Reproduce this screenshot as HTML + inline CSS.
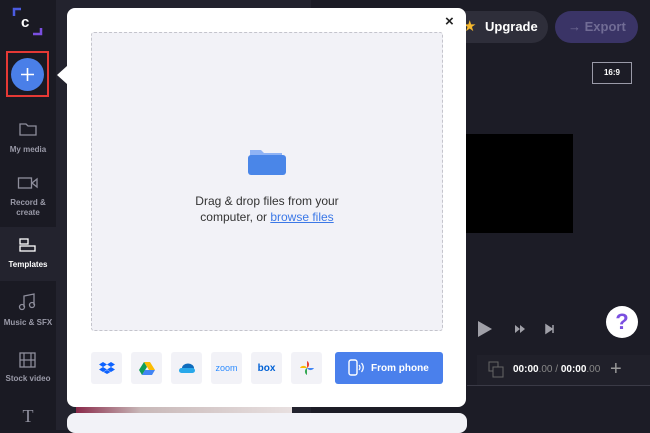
<!DOCTYPE html>
<html><head><meta charset="utf-8"><style>
*{margin:0;padding:0;box-sizing:border-box}
body{width:650px;height:430px;overflow:hidden;background:#1c1c26;font-family:"Liberation Sans",sans-serif;position:relative}
.abs{position:absolute}
.side{left:0;top:0;width:56px;height:430px;background:#1a1a23}
.lbl{width:56px;text-align:center;color:#9a9aa8;font-size:8px;font-weight:bold;line-height:10px}
.panel{left:56px;top:0;width:255px;height:430px;background:#23232e}
.btn{width:31px;height:32px;background:#f2f2f7;border-radius:3px;top:352px;display:flex;align-items:center;justify-content:center}
</style></head><body>
<div class="abs side"></div>
<div class="abs" style="left:0;top:227px;width:56px;height:54px;background:#23232e"></div>
<svg class="abs" style="left:12px;top:6px" width="32" height="30"><path d="M2 10V3h7" stroke="#4b5be0" stroke-width="2.5" fill="none"/><path d="M29 22v6h-8" stroke="#7a4fe0" stroke-width="2.5" fill="none"/><text x="9" y="21" fill="#fff" font-size="15" font-weight="bold" font-family="Liberation Sans">c</text></svg>
<div class="abs" style="left:6px;top:51px;width:43px;height:46px;border:2px solid #e53935"></div>
<div class="abs" style="left:11px;top:58px;width:33px;height:33px;border-radius:50%;background:#4a7fe8"></div>
<svg class="abs" style="left:19px;top:66px" width="17" height="17"><path d="M8.5 2v13M2 8.5h13" stroke="#fff" stroke-width="1.6"/></svg>
<svg class="abs" style="left:18px;top:121px" width="20" height="16"><path d="M2 3h6l2 2h8v9H2z" stroke="#8e8e9c" stroke-width="1.3" fill="none"/></svg>
<div class="abs lbl" style="left:0;top:145px">My media</div>
<svg class="abs" style="left:17px;top:176px" width="22" height="14"><rect x="1.5" y="2" width="13" height="10" stroke="#8e8e9c" stroke-width="1.3" fill="none"/><path d="M15 7l5-4v8z" stroke="#8e8e9c" stroke-width="1.3" fill="none"/></svg>
<div class="abs lbl" style="left:0;top:198px">Record &amp;<br>create</div>
<svg class="abs" style="left:18px;top:237px" width="20" height="16"><rect x="2" y="2" width="8" height="5" stroke="#fff" stroke-width="1.3" fill="none"/><rect x="2" y="9" width="15" height="5" stroke="#fff" stroke-width="1.3" fill="none"/></svg>
<div class="abs lbl" style="left:0;top:260px;color:#fff">Templates</div>
<svg class="abs" style="left:18px;top:292px" width="20" height="20"><path d="M6 15V4l10-2v11" stroke="#8e8e9c" stroke-width="1.3" fill="none"/><circle cx="4" cy="15" r="2.5" stroke="#8e8e9c" stroke-width="1.3" fill="none"/><circle cx="14" cy="13" r="2.5" stroke="#8e8e9c" stroke-width="1.3" fill="none"/></svg>
<div class="abs lbl" style="left:0;top:318px">Music &amp; SFX</div>
<svg class="abs" style="left:18px;top:351px" width="20" height="18"><rect x="2" y="2" width="15" height="14" stroke="#8e8e9c" stroke-width="1.3" fill="none"/><path d="M6 2v14M13 2v14M2 9h15" stroke="#8e8e9c" stroke-width="1.2"/></svg>
<div class="abs lbl" style="left:0;top:374px">Stock video</div>
<div class="abs" style="left:0;top:406px;width:56px;text-align:center;color:#8e8e9c;font-family:'Liberation Serif';font-size:18px">T</div>

<div class="abs panel"></div>
<div class="abs" style="left:76px;top:405px;width:216px;height:10px;background:linear-gradient(90deg,#8a2a4a,#c8b8b8 30%,#e8e0e0)"></div>
<div class="abs" style="left:67px;top:413px;width:400px;height:20px;background:#f2f2f7;border-radius:8px"></div>

<div class="abs" style="left:440px;top:11px;width:108px;height:32px;border-radius:16px;background:#2e2e3a"></div>
<div class="abs" style="left:463px;top:17px;color:#f5b82e;font-size:15px">★</div>
<div class="abs" style="left:485px;top:19px;color:#fff;font-size:13px;font-weight:bold">Upgrade</div>
<div class="abs" style="left:555px;top:11px;width:83px;height:32px;border-radius:16px;background:#3a3466"></div>
<div class="abs" style="left:568px;top:19px;color:#716c95;font-size:13px;font-weight:bold">→ Export</div>
<div class="abs" style="left:592px;top:62px;width:40px;height:22px;border:1px solid #9a9aa8;color:#fff;font-size:8px;font-weight:bold;text-align:center;line-height:20px">16:9</div>
<div class="abs" style="left:440px;top:134px;width:133px;height:99px;background:#000"></div>
<svg class="abs" style="left:476px;top:319px" width="80" height="20"><path d="M2 2l14 8-14 8z" fill="#a0a0a8"/><path d="M39 6l5 4-5 4zM44 6l5 4-5 4z" fill="#a0a0a8"/><path d="M70 6l6 4-6 4z M77 6v8" fill="#a0a0a8" stroke="#a0a0a8" stroke-width="1.5"/></svg>
<div class="abs" style="left:606px;top:306px;width:32px;height:32px;border-radius:50%;background:#fff;color:#7a4fe0;font-size:22px;font-weight:bold;text-align:center;line-height:32px">?</div>
<div class="abs" style="left:477px;top:355px;width:173px;height:30px;background:#20202a"></div>
<svg class="abs" style="left:487px;top:360px" width="18" height="18"><rect x="2" y="2" width="9" height="9" stroke="#666" fill="none"/><rect x="6" y="7" width="10" height="10" stroke="#666" fill="#20202a"/></svg>
<div class="abs" style="left:513px;top:364px;color:#fff;font-size:10px;font-weight:bold">00:00<span style="color:#888;font-weight:normal">.00 / </span>00:00<span style="color:#888;font-weight:normal">.00</span></div>
<div class="abs" style="left:610px;top:358px;color:#999;font-size:20px">+</div>
<div class="abs" style="left:467px;top:385px;width:183px;height:1px;background:#3a3a46"></div>

<div class="abs" style="left:57px;top:66px;width:0;height:0;border-top:9px solid transparent;border-bottom:9px solid transparent;border-right:10px solid #fff"></div>
<div class="abs" style="left:67px;top:8px;width:399px;height:399px;background:#fff;border-radius:8px"></div>
<div class="abs" style="left:445px;top:13px;font-size:15px;font-weight:bold;color:#222">×</div>
<div class="abs" style="left:91px;top:32px;width:352px;height:299px;background:#f2f2f7;border:1px dashed #c4c4cc;border-radius:3px"></div>
<svg class="abs" style="left:247px;top:146px" width="40" height="30"><path d="M3 4h11l3 3h18v6H3z" fill="#8fb3f5"/><rect x="1" y="9" width="38" height="20" rx="3" fill="#4a86e8"/></svg>
<div class="abs" style="left:91px;top:193px;width:352px;text-align:center;color:#333;font-size:12px;line-height:16px">Drag &amp; drop files from your<br>computer, or <span style="color:#3b78e7;text-decoration:underline">browse files</span></div>
<div class="abs btn" style="left:91px"><svg width="16" height="14"><path d="M4 1l4 2.5-4 2.5-4-2.5zM12 1l4 2.5-4 2.5-4-2.5zM4 6l4 2.5-4 2.5-4-2.5zM12 6l4 2.5-4 2.5-4-2.5zM8 9l3.5 2-3.5 2-3.5-2z" fill="#0d62ff"/></svg></div>
<div class="abs btn" style="left:131px"><svg width="16" height="14"><path d="M5 1h6l5 8h-6z" fill="#fbbc04"/><path d="M5 1l-5 8 3 5 5-8z" fill="#0f9d58"/><path d="M3 14h10l3-5H6z" fill="#4285f4"/></svg></div>
<div class="abs btn" style="left:171px"><svg width="18" height="11"><ellipse cx="10" cy="5" rx="6" ry="4.5" fill="#0f6cbd"/><rect x="1" y="5" width="16" height="5" rx="2.5" fill="#28a8ea"/></svg></div>
<div class="abs btn" style="left:211px;color:#2d8cff;font-size:9px">zoom</div>
<div class="abs btn" style="left:251px;color:#0061d5;font-size:10px;font-weight:bold">box</div>
<div class="abs btn" style="left:291px"><svg width="16" height="16"><path d="M8 8V1a4 4 0 010 7z" fill="#ea4335"/><path d="M8 8h7a4 4 0 01-7 0z" fill="#4285f4"/><path d="M8 8v7a4 4 0 010-7z" fill="#34a853"/><path d="M8 8H1a4 4 0 017 0z" fill="#fbbc04"/></svg></div>
<div class="abs" style="left:335px;top:352px;width:108px;height:32px;background:#4a80ec;border-radius:3px"></div>
<svg class="abs" style="left:347px;top:358px" width="18" height="20"><rect x="2" y="2" width="8" height="15" rx="2" stroke="#fff" stroke-width="1.4" fill="none"/><path d="M12 7q2 2.5 0 5M14.5 5q3.5 4.5 0 9" stroke="#fff" stroke-width="1.2" fill="none"/></svg>
<div class="abs" style="left:371px;top:363px;color:#fff;font-size:10px;font-weight:bold">From phone</div>
</body></html>
